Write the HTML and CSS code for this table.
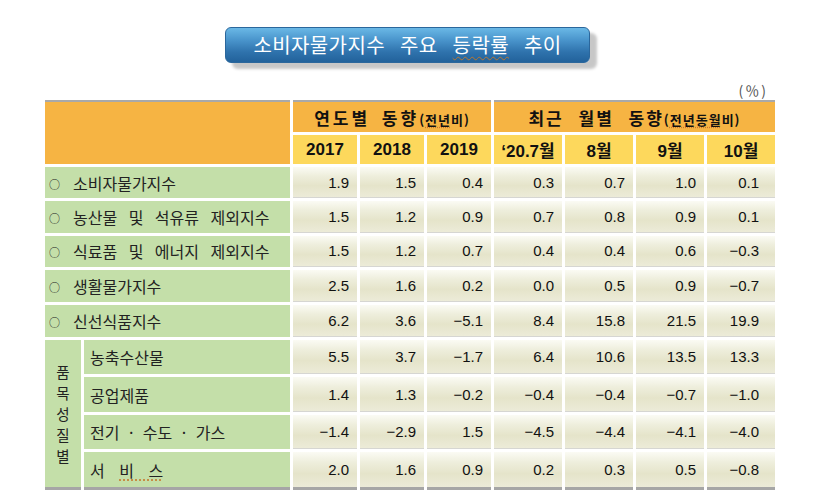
FILE: index.html
```html
<!DOCTYPE html>
<html lang="ko">
<head>
<meta charset="utf-8">
<title>소비자물가지수 주요 등락률 추이</title>
<link rel="stylesheet" href="styles.css">
</head>
<body>
<div class="page">
  <div class="title-wrap">
    <div class="title">소비자물가지수 주요 <span class="sp">등락률</span> 추이</div>
  </div>
  <div class="unit">(％)</div>
  <div class="tbl">
    <div class="hd corner"></div>
    <div class="hd grp g-year"><span>연도별 동향<small>(<span class="sp">전년</span>비)</small></span></div>
    <div class="hd grp g-month"><span>최근 월별 동향<small>(<span class="sp">전년동월</span>비)</small></span></div>

    <div class="yr">2017</div>
    <div class="yr">2018</div>
    <div class="yr">2019</div>
    <div class="yr">‘20.7월</div>
    <div class="yr">8월</div>
    <div class="yr">9월</div>
    <div class="yr">10월</div>

    <div class="lbl"><span class="bul">○</span>소비자물가지수</div>
    <div class="num">1.9</div><div class="num">1.5</div><div class="num">0.4</div><div class="num">0.3</div><div class="num">0.7</div><div class="num">1.0</div><div class="num last">0.1</div>

    <div class="lbl"><span class="bul">○</span>농산물 및 석유류 제외지수</div>
    <div class="num">1.5</div><div class="num">1.2</div><div class="num">0.9</div><div class="num">0.7</div><div class="num">0.8</div><div class="num">0.9</div><div class="num last">0.1</div>

    <div class="lbl"><span class="bul">○</span>식료품 및 에너지 제외지수</div>
    <div class="num">1.5</div><div class="num">1.2</div><div class="num">0.7</div><div class="num">0.4</div><div class="num">0.4</div><div class="num">0.6</div><div class="num last">−0.3</div>

    <div class="lbl"><span class="bul">○</span>생활물가지수</div>
    <div class="num">2.5</div><div class="num">1.6</div><div class="num">0.2</div><div class="num">0.0</div><div class="num">0.5</div><div class="num">0.9</div><div class="num last">−0.7</div>

    <div class="lbl"><span class="bul">○</span>신선식품지수</div>
    <div class="num">6.2</div><div class="num">3.6</div><div class="num">−5.1</div><div class="num">8.4</div><div class="num">15.8</div><div class="num">21.5</div><div class="num last">19.9</div>

    <div class="vert bottom"><span>품</span><span>목</span><span>성</span><span>질</span><span>별</span></div>

    <div class="sub">농축수산물</div>
    <div class="num">5.5</div><div class="num">3.7</div><div class="num">−1.7</div><div class="num">6.4</div><div class="num">10.6</div><div class="num">13.5</div><div class="num last">13.3</div>

    <div class="sub">공업제품</div>
    <div class="num">1.4</div><div class="num">1.3</div><div class="num">−0.2</div><div class="num">−0.4</div><div class="num">−0.4</div><div class="num">−0.7</div><div class="num last">−1.0</div>

    <div class="sub tight">전기 · 수도 · 가스</div>
    <div class="num">−1.4</div><div class="num">−2.9</div><div class="num">1.5</div><div class="num">−4.5</div><div class="num">−4.4</div><div class="num">−4.1</div><div class="num last">−4.0</div>

    <div class="sub wide bottom"><span>서 <span class="sp">비 스</span></span></div>
    <div class="num bottom">2.0</div><div class="num bottom">1.6</div><div class="num bottom">0.9</div><div class="num bottom">0.2</div><div class="num bottom">0.3</div><div class="num bottom">0.5</div><div class="num last bottom">−0.8</div>
  </div>
</div>
</body>
</html>
```
FILE: styles.css
```css
* { box-sizing: border-box; }
html, body { margin: 0; padding: 0; background: #ffffff; }
body {
  font-family: "Noto Sans CJK KR", "Liberation Sans", sans-serif;
  color: #1a1a1a;
}
.page {
  width: 813px;
  padding: 27px 0 0 45px;
}
.title-wrap {
  padding-left: 180px;
}
.title {
  width: 365px;
  height: 36px;
  border-radius: 6px;
  border: 1px solid #2b679c;
  background: linear-gradient(to bottom, #6ab8e6 0%, #4a95cc 35%, #2f73ad 70%, #22629b 100%);
  box-shadow: 7px 6px 3px rgba(0, 0, 0, 0.22);
  color: #ffffff;
  font-size: 20px;
  letter-spacing: 0.4px;
  word-spacing: 9px;
  line-height: 34px;
  text-align: center;
}
.title .sp {
  text-decoration: underline wavy #b9762f;
  text-decoration-thickness: 1px;
  text-underline-offset: 3px;
}
.unit {
  width: 723px;
  margin-top: 19px;
  height: 18px;
  text-align: right;
  font-size: 14px;
  line-height: 16px;
  color: #555;
  letter-spacing: 2px;
}
.tbl {
  display: grid;
  width: 730px;
  grid-template-columns: 36px 206px repeat(3, 64px) repeat(4, 68px);
  grid-template-rows: 32px 29px 31.4px 31.4px 31.4px 31.4px 32.4px 34.5px 34.5px 34.5px 37.5px;
  gap: 3px;
}
.hd {
  border-top: 2px solid #a9a9a9;
  background: #f6b443;
  display: flex;
  align-items: center;
  justify-content: center;
  font-weight: 700;
}
.corner {
  grid-column: 1 / 3;
  grid-row: 1 / 3;
}
.grp {
  font-size: 17px;
  letter-spacing: 3px;
  word-spacing: 4px;
  color: #111;
}
.grp small {
  font-size: 13px;
  letter-spacing: 1px;
}
.grp .sp {
  text-decoration: underline dotted #c6792e;
  text-underline-offset: 2px;
}
.g-year { grid-column: 3 / 6; }
.g-month { grid-column: 6 / 10; letter-spacing: 2px; word-spacing: 8px; }
.yr {
  background: #fdd85c;
  display: flex;
  align-items: center;
  justify-content: center;
  font-family: "Liberation Sans", "Noto Sans CJK KR", sans-serif;
  font-weight: 700;
  font-size: 17px;
  color: #111;
}
.lbl {
  grid-column: 1 / 3;
  background: #c4dfa9;
  display: flex;
  align-items: center;
  font-size: 16px;
  word-spacing: 7px;
  color: #222;
  white-space: nowrap;
}
.bul {
  display: inline-block;
  width: 10px;
  margin-left: 4px;
  margin-right: 14px;
  font-size: 11px;
  line-height: 12px;
  text-align: center;
  position: relative;
  top: 1px;
}
.sub {
  background: #c4dfa9;
  display: flex;
  align-items: center;
  padding-left: 6px;
  font-size: 16px;
  word-spacing: 7px;
  color: #222;
  white-space: nowrap;
}
.sub.tight { word-spacing: 5px; }
.sub.wide { word-spacing: 10px; }
.sub .sp {
  text-decoration: underline dotted #c6792e;
  text-underline-offset: 3px;
}
.vert {
  grid-column: 1;
  grid-row: 8 / 12;
  background: #c4dfa9;
  display: flex;
  flex-direction: column;
  align-items: center;
  justify-content: center;
  font-size: 14.5px;
  line-height: 21px;
  color: #222;
}
.vert span { display: block; height: 21px; }
.num {
  background: linear-gradient(to bottom, #fbfbf4 0%, #eeeedc 30%, #e5e4ca 62%, #ecebd8 100%);
  border-bottom: 1px solid #d6d6d2;
  display: flex;
  align-items: center;
  justify-content: flex-end;
  padding-right: 8px;
  font-family: "Liberation Sans", sans-serif;
  font-size: 15px;
  color: #111;
}
.num.last { padding-right: 16px; }
.bottom { border-bottom: 3px solid #a6a6a6; }
```
